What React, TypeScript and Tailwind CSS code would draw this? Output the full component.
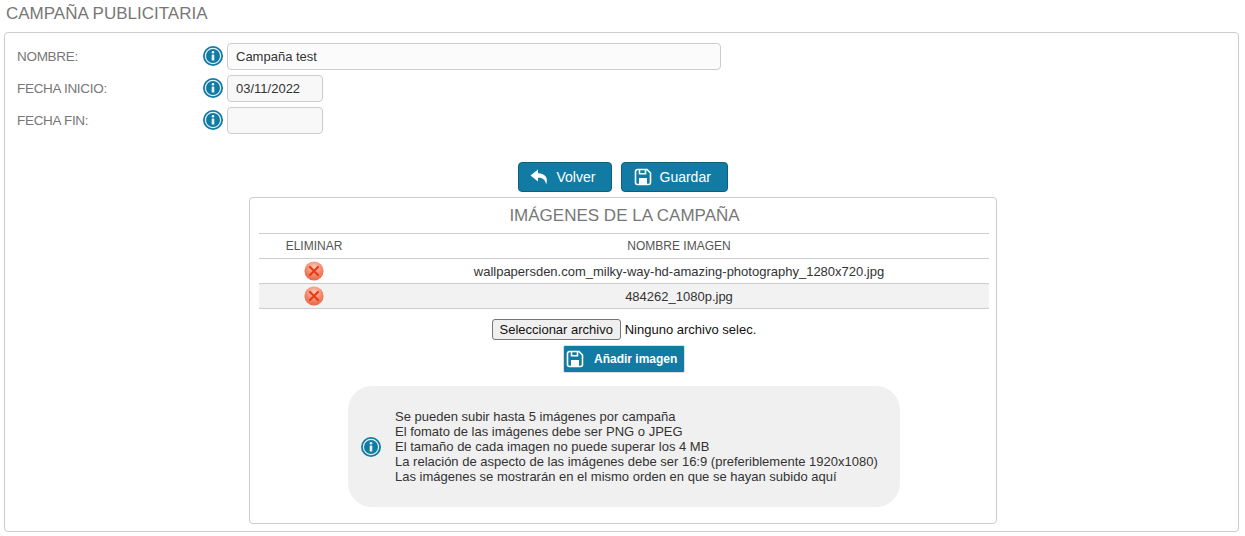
const font = "font-['Liberation_Sans',Arial,sans-serif]";

function Info({ className = "" }: { className?: string }) {
  return (
    <svg width="20" height="20" viewBox="0 0 20 20" className={"shrink-0 " + className}>
      <circle cx="10" cy="10" r="10" fill="#127ba3" />
      <circle cx="10" cy="10" r="7.6" fill="#127ba3" stroke="#e8f2f6" strokeWidth="1.2" />
      <circle cx="10" cy="6.2" r="1.3" fill="#e8f2f6" />
      <rect x="8.7" y="8.5" width="2.6" height="6" rx="0.5" fill="#e8f2f6" />
    </svg>
  );
}

function SaveIcon() {
  return (
    <svg width="18" height="18" viewBox="0 0 18 18" fill="none" stroke="#fff" strokeWidth="1.6" className="shrink-0">
      <path d="M3.5 1.5h9.5l3.5 3.5v9.5a2 2 0 0 1-2 2h-11a2 2 0 0 1-2-2v-11a2 2 0 0 1 2-2z" />
      <path d="M5.5 1.8v4h6v-4" />
      <rect x="5" y="10" width="8" height="6.5" fill="#fff" stroke="none" />
    </svg>
  );
}

function BackIcon() {
  return (
    <svg width="19" height="16" viewBox="0 0 19 16" className="shrink-0">
      <path d="M8 0.5 0.5 6.5 8 12.5V8.8c4.500 0 7.200 1.500 8.200 6.700 2.200-6.800-.8-11-8.200-11.300z" fill="#fff" />
    </svg>
  );
}

function DeleteIcon() {
  return (
    <svg width="20" height="20" viewBox="0 0 20 20">
      <defs>
        <radialGradient id="red" cx="50%" cy="30%" r="75%">
          <stop offset="0" stopColor="#fbc9b8" />
          <stop offset="0.55" stopColor="#f4876c" />
          <stop offset="1" stopColor="#e5613f" />
        </radialGradient>
      </defs>
      <circle cx="10" cy="10" r="9.6" fill="url(#red)" />
      <path d="M6 6l8 8M14 6l-8 8" stroke="#e63d14" strokeWidth="2.200" strokeLinecap="round" />
    </svg>
  );
}

function Row({ label, children }: { label: string; children: React.ReactNode }) {
  return (
    <div className="flex items-center h-[27px]">
      <span className="w-[186px] shrink-0 pt-[1px] text-[13.5px] text-[#777] tracking-[-0.3px]">{label}</span>
      <Info className="mr-[4px] mb-[1px]" />
      {children}
    </div>
  );
}

const notes = [
  "Se pueden subir hasta 5 imágenes por campaña",
  "El fomato de las imágenes debe ser PNG o JPEG",
  "El tamaño de cada imagen no puede superar los 4 MB",
  "La relación de aspecto de las imágenes debe ser 16:9 (preferiblemente 1920x1080)",
  "Las imágenes se mostrarán en el mismo orden en que se hayan subido aquí",
];

export default function App() {
  return (
    <div className={font + " w-[1245px] h-[536px] bg-white overflow-hidden px-[4px] text-[#333]"}>
      <h1 className="h-[32px] pt-[4px] pl-[2px] text-[17px] leading-[19px] text-[#777] font-normal">CAMPAÑA PUBLICITARIA</h1>
      <div className="w-[1235px] h-[500px] border border-[#ccc] rounded-[4px] pt-[10px] pl-[12px]">
        <div className="flex flex-col gap-[5px]">
          <Row label="NOMBRE:">
            <div className="w-[494px] h-[27px] border border-[#ccc] rounded-[4px] bg-[#fbfbfb] flex items-center pl-[8px] text-[13px] text-[#333]">Campaña test</div>
          </Row>
          <Row label="FECHA INICIO:">
            <div className="w-[96px] h-[27px] border border-[#ccc] rounded-[4px] bg-[#f8f8f8] flex items-center pl-[8px] text-[13px] text-[#333]">03/11/2022</div>
          </Row>
          <Row label="FECHA FIN:">
            <div className="w-[96px] h-[27px] border border-[#ccc] rounded-[4px] bg-[#f8f8f8]" />
          </Row>
        </div>

        <div className="flex justify-center gap-[9px] mt-[28px] -ml-[12px] w-[1235px]">
          <button className="w-[94px] h-[30px] bg-[#127ba3] border border-[#0d5f80] rounded-[4px] text-white text-[14px] flex items-center pl-[11px] gap-[8px]">
            <BackIcon />Volver
          </button>
          <button className="w-[107px] h-[30px] bg-[#127ba3] border border-[#0d5f80] rounded-[4px] text-white text-[14px] flex items-center pl-[12px] gap-[8px]">
            <SaveIcon />Guardar
          </button>
        </div>

        <div className="w-[748px] h-[327px] border border-[#ccc] rounded-[4px] ml-[232px] mt-[5px] pl-[9px] pr-[7px]">
          <h2 className="h-[36px] pl-[1px] flex items-center justify-center text-[17px] text-[#777] font-normal border-b border-[#ccc]">IMÁGENES DE LA CAMPAÑA</h2>
          <div className="flex h-[25px] items-center text-[12px] text-[#555] border-b border-[#ccc]">
            <span className="w-[110px] text-center">ELIMINAR</span>
            <span className="flex-1 text-center">NOMBRE IMAGEN</span>
          </div>
          <div className="flex h-[25px] items-center text-[13px] text-[#333] border-b border-[#ccc]">
            <span className="w-[110px] flex justify-center"><DeleteIcon /></span>
            <span className="flex-1 text-center pt-[1px]">wallpapersden.com_milky-way-hd-amazing-photography_1280x720.jpg</span>
          </div>
          <div className="flex h-[25px] items-center text-[13px] text-[#333] bg-[#f2f2f2] border-b border-[#ccc]">
            <span className="w-[110px] flex justify-center"><DeleteIcon /></span>
            <span className="flex-1 text-center pt-[1px]">484262_1080p.jpg</span>
          </div>

          <div className="flex justify-center items-center mt-[10px] text-[13px] text-[#111]">
            <span className="h-[21px] w-[129px] flex items-center justify-center border border-[#767676] rounded-[3px] bg-[#efefef] mr-[4px]">Seleccionar archivo</span>
            <span>Ninguno archivo selec.</span>
          </div>
          <div className="flex justify-center mt-[5px]">
            <button className="w-[122px] h-[28px] bg-[#127ba3] border border-[#ddd] rounded-[2px] text-white text-[12px] font-bold whitespace-nowrap flex items-center pl-[2px] gap-[10px]">
              <SaveIcon />Añadir imagen
            </button>
          </div>

          <div className="w-[552px] h-[121px] bg-[#f0f0f0] rounded-[24px] ml-[89px] mt-[13px] flex items-center pl-[13px] gap-[14px]">
            <Info />
            <div className="text-[13px] leading-[15px] text-[#333]">
              {notes.map((n) => (
                <div key={n}>{n}</div>
              ))}
            </div>
          </div>
        </div>
      </div>
    </div>
  );
}
